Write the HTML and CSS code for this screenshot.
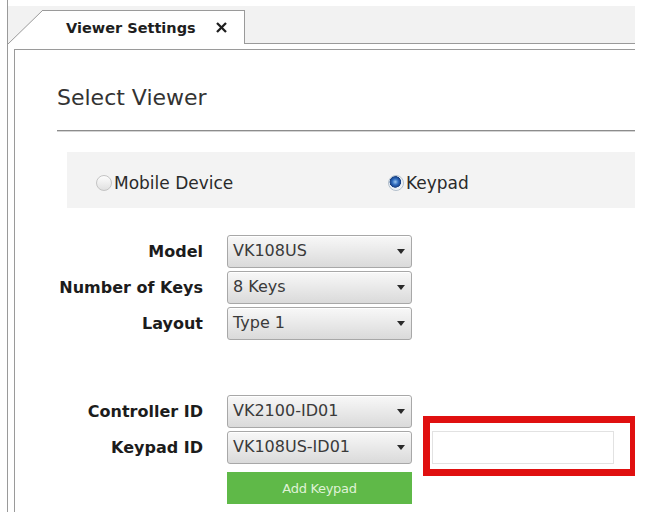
FILE: index.html
```html
<!DOCTYPE html>
<html lang="en">
<head>
    <meta charset="UTF-8">
    <meta name="viewport" content="width=device-width, initial-scale=1.0">
    <title>Viewer Settings</title>
    <link rel="stylesheet" href="styles.css">
</head>
<body>
    <div class="window">
        <div class="tabstrip">
            <div class="tab">
                <svg class="tab-slant" width="35" height="34" viewBox="0 0 35 34">
                    <polygon points="0,34 35,0 35,34" fill="#fff"/>
                    <line x1="0" y1="34" x2="35" y2="0" stroke="#9a9a9a" stroke-width="1"/>
                </svg>
                <div class="tab-label">
                    <span>Viewer Settings</span>
                    <svg class="tab-close" width="11" height="11" viewBox="0 0 11 11">
                        <line x1="1" y1="1" x2="10" y2="10" stroke="#1e1e1e" stroke-width="2.3"/>
                        <line x1="10" y1="1" x2="1" y2="10" stroke="#1e1e1e" stroke-width="2.3"/>
                    </svg>
                </div>
            </div>
            <div class="tab-rest"></div>
        </div>

        <div class="panel-wrap">
            <div class="panel">
                <h2 class="title">Select Viewer</h2>
                <div class="rule"></div>

                <div class="viewer-choice">
                    <label class="option option-first"><span class="radio"></span>Mobile Device</label>
                    <label class="option"><span class="radio radio-on"></span>Keypad</label>
                </div>

                <div class="form-grid model-grid">
                    <div class="field-label">Model</div>
                    <div class="dropdown">VK108US<span class="caret"></span></div>

                    <div class="field-label">Number of Keys</div>
                    <div class="dropdown">8 Keys<span class="caret"></span></div>

                    <div class="field-label">Layout</div>
                    <div class="dropdown">Type 1<span class="caret"></span></div>
                </div>

                <div class="form-grid id-grid">
                    <div class="field-label">Controller ID</div>
                    <div class="dropdown">VK2100-ID01<span class="caret"></span></div>
                    <div></div>

                    <div class="field-label">Keypad ID</div>
                    <div class="dropdown">VK108US-ID01<span class="caret"></span></div>
                    <div class="name-cell">
                        <div class="name-input"></div>
                        <div class="highlight"></div>
                    </div>

                    <div></div>
                    <button class="add-btn">Add Keypad</button>
                    <div></div>
                </div>
            </div>
        </div>
    </div>
</body>
</html>
```

FILE: styles.css
```css
body {
    margin: 0;
    background-color: #fff;
    font-family: "DejaVu Sans", Verdana, sans-serif;
    color: #222;
}

.window {
    margin-left: 7px;
    width: 628px;
    height: 512px;
    box-sizing: border-box;
    padding-top: 6px;
    border-left: 1px solid #9a9a9a;
    overflow: hidden;
}

.tabstrip {
    display: flex;
    align-items: flex-end;
    height: 38px;
    background-color: #f2f2f2;
}

.tab {
    display: flex;
    height: 34px;
}

.tab-slant {
    display: block;
}

.tab-label {
    display: flex;
    align-items: center;
    width: 178px;
    padding-left: 23px;
    background-color: #fff;
    border-top: 1px solid #9a9a9a;
    border-right: 1px solid #9a9a9a;
    font-size: 14.5px;
    font-weight: bold;
    color: #1e1e1e;
}

.tab-close {
    margin-left: 20px;
}

.tab-rest {
    flex: 1;
    align-self: stretch;
    border-bottom: 1px solid #9a9a9a;
}

.panel-wrap {
    padding: 5px 0 0 6px;
    height: 100%;
}

.panel {
    height: 100%;
    border-top: 1px solid #9a9a9a;
    border-left: 1px solid #9a9a9a;
    padding-left: 42px;
}

.title {
    margin: 0;
    padding-top: 35px;
    font-size: 22px;
    line-height: 26px;
    font-weight: normal;
    color: #333;
}

.rule {
    margin-top: 19px;
    height: 1px;
    background-color: #8c8c8c;
    border-bottom: 1px solid #d4d4d4;
}

.viewer-choice {
    display: flex;
    align-items: center;
    margin: 20px 0 0 10px;
    height: 56px;
    padding: 5px 0 0 29px;
    box-sizing: border-box;
    background-color: #f3f3f3;
}

.option {
    display: flex;
    align-items: center;
    gap: 2px;
    font-size: 17px;
    color: #2a2a2a;
}

.option-first {
    width: 292px;
}

.radio {
    flex: none;
    width: 14px;
    height: 14px;
    border-radius: 50%;
    border: 1.5px solid #c4c4c4;
    background: linear-gradient(#fdfdfd, #e0e0e0);
}

.radio-on {
    border-color: #b3c0cc;
    background: radial-gradient(circle at 45% 42%, #9cc8f0 0, #2f6cc0 3px, #173f82 5.5px, #e4ecf4 6px, #f4f7fa 8px);
}

.form-grid {
    display: grid;
    grid-auto-rows: 33px;
    column-gap: 24px;
    row-gap: 3px;
    align-items: center;
}

.model-grid {
    grid-template-columns: 146px 185px;
    margin-top: 27px;
}

.id-grid {
    grid-template-columns: 146px 185px 178px;
    margin-top: 55px;
}

.field-label {
    text-align: right;
    font-size: 16px;
    font-weight: bold;
    color: #1c1c1c;
}

.dropdown {
    position: relative;
    height: 31px;
    line-height: 30px;
    padding-left: 5px;
    border: 1px solid #a8a8a8;
    border-radius: 3px;
    background: linear-gradient(#f8f8f8, #e9e9e9 50%, #dadada);
    box-shadow: inset 0 1px 0 #fff;
    font-size: 16px;
    color: #3a3a3a;
}

.caret {
    position: absolute;
    right: 6px;
    top: 13px;
    border-left: 4px solid transparent;
    border-right: 4px solid transparent;
    border-top: 5px solid #2a2a2a;
}

.name-cell {
    position: relative;
    height: 33px;
    margin-left: -4px;
}

.name-input {
    height: 31px;
    border: 1px solid #e2e2e2;
    background-color: #fff;
}

.highlight {
    position: absolute;
    top: -15px;
    left: -9px;
    right: -23px;
    bottom: -12px;
    border: 7px solid #e01010;
}

.add-btn {
    align-self: end;
    height: 32px;
    margin-bottom: -4px;
    border: none;
    background-color: #5fb948;
    color: #dff2d6;
    font-family: "DejaVu Sans", Verdana, sans-serif;
    font-size: 13px;
    letter-spacing: -0.3px;
}
```
